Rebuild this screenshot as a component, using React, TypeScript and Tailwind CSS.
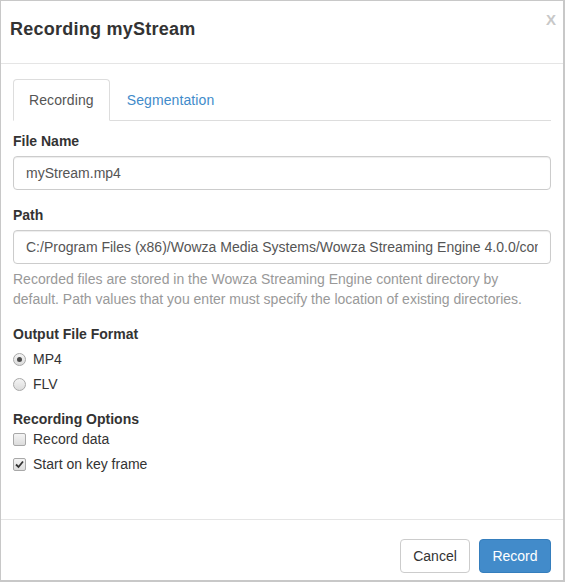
import React from "react";

function Radio({ checked, label }: { checked?: boolean; label: string }) {
  return (
    <div className="flex items-center h-5">
      <span className="w-[13px] h-[13px] rounded-full border border-[#a8a8a8] bg-gradient-to-b from-[#f4f4f4] to-[#dcdcdc] flex items-center justify-center">
        {checked && <span className="w-[5px] h-[5px] rounded-full bg-[#4a4a4a]" />}
      </span>
      <span className="ml-[7px] text-[14px] text-[#333]">{label}</span>
    </div>
  );
}

function Check({ checked, label }: { checked?: boolean; label: string }) {
  return (
    <div className="flex items-center h-5">
      <span className="w-[13px] h-[13px] rounded-[2px] border border-[#a8a8a8] bg-gradient-to-b from-[#f4f4f4] to-[#dcdcdc] flex items-center justify-center">
        {checked && (
          <svg width="9" height="9" viewBox="0 0 9 9">
            <path d="M1 4.5 L3.5 7 L8 1.5" fill="none" stroke="#333" strokeWidth="1.8" />
          </svg>
        )}
      </span>
      <span className="ml-[7px] text-[14px] text-[#333]">{label}</span>
    </div>
  );
}

const inputCls =
  "block w-full h-[34px] border border-[#ccc] rounded-[4px] px-[12px] text-[14px] text-[#555] bg-white outline-none shadow-[inset_0_1px_1px_rgba(0,0,0,0.075)]";

export default function App() {
  return (
    <div
      className="w-[565px] h-[582px] bg-[#c8c8c8] pl-[1px] pt-[1px]"
      style={{ fontFamily: '"Liberation Sans", Arial, sans-serif' }}
    >
      <div className="w-[562px] h-[579px] bg-white flex flex-col">
        {/* header */}
        <div className="h-[62px] border-b border-[#e5e5e5] flex items-start justify-between pl-[9px] pr-[7px] box-content">
          <h4 className="text-[18px] font-bold text-[#333] leading-[26px] mt-[15px] tracking-[0.25px]">Recording myStream</h4>
          <span className="text-[15px] font-bold text-[#c8c8c8] leading-none mt-[11px]">X</span>
        </div>
        {/* body */}
        <div className="px-[12px] pt-[15px] flex-1">
          <div className="flex border-b border-[#ddd] h-[42px]">
            <div className="h-[42px] px-[15px] pt-[10px] border border-[#ddd] border-b-white rounded-t-[4px] text-[14px] text-[#555] leading-5 bg-white tracking-[0.1px]">
              Recording
            </div>
            <div className="ml-[2px] h-[41px] px-[15px] pt-[11px] text-[14px] text-[#428bca] leading-5 tracking-[0.1px]">
              Segmentation
            </div>
          </div>

          <div className="mt-[10px]">
            <div className="text-[14px] font-bold text-[#333] leading-5 mb-[5px]">File Name</div>
            <input readOnly className={inputCls} style={{ fontFamily: "inherit" }} value="myStream.mp4" />
          </div>

          <div className="mt-[15px]">
            <div className="text-[14px] font-bold text-[#333] leading-5 mb-[5px]">Path</div>
            <input
              readOnly
              className={inputCls}
              style={{ fontFamily: "inherit" }}
              value="C:/Program Files (x86)/Wowza Media Systems/Wowza Streaming Engine 4.0.0/content"
            />
            <p className="mt-[5px] text-[14px] leading-5 text-[#999] max-w-[530px]">
              Recorded files are stored in the Wowza Streaming Engine content directory by default. Path values that you enter must specify the location of existing directories.
            </p>
          </div>

          <div className="mt-[15px]">
            <div className="text-[14px] font-bold text-[#333] leading-5 mb-[5px]">Output File Format</div>
            <Radio checked label="MP4" />
            <div className="mt-[5px]">
              <Radio label="FLV" />
            </div>
          </div>

          <div className="mt-[15px]">
            <div className="text-[14px] font-bold text-[#333] leading-5">Recording Options</div>
            <Check label="Record data" />
            <div className="mt-[5px]">
              <Check checked label="Start on key frame" />
            </div>
          </div>
        </div>
        {/* footer */}
        <div className="h-[61px] border-t border-[#e5e5e5] flex justify-end items-start pt-[19px] pr-[12px] gap-[9px]">
          <div className="h-[34px] w-[70px] border border-[#ccc] rounded-[4px] flex items-center justify-center text-[14px] text-[#333] bg-white">
            Cancel
          </div>
          <div className="h-[34px] w-[72px] border border-[#357ebd] rounded-[4px] flex items-center justify-center text-[14px] text-white bg-[#428bca]">
            Record
          </div>
        </div>
      </div>
    </div>
  );
}
